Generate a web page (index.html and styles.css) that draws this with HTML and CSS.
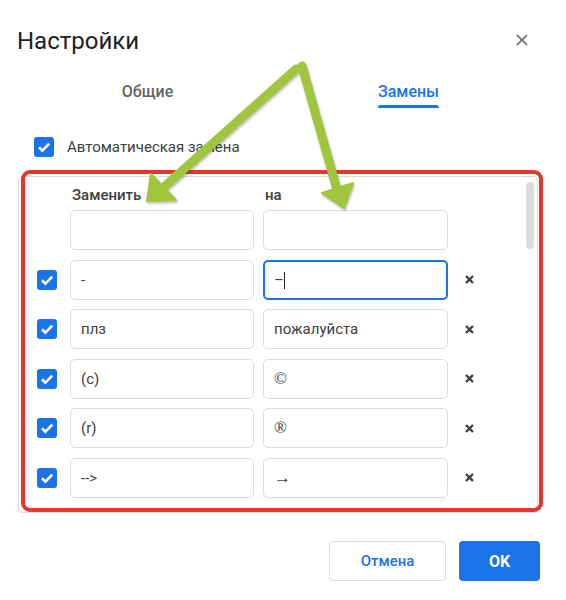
FILE: index.html
```html
<!DOCTYPE HTML>
<html>
<head>
  <meta charset="utf-8">
  <title>Настройки</title>
  <link rel="stylesheet" href="styles.css">
</head>
<body>
<div class="dialog">
  <header class="dialog-head">
    <h1>Настройки</h1>
    <span class="close">
      <svg width="12" height="12" viewBox="0 0 12 12"><path d="M1 1L11 11M11 1L1 11" stroke="#5f6368" stroke-width="1.6" fill="none"/></svg>
    </span>
  </header>
  <nav class="tabs">
    <div class="tab"><span>Общие</span></div>
    <div class="tab active"><span>Замены</span></div>
  </nav>
  <label class="auto">
    <span class="check"><svg width="20" height="20" viewBox="0 0 20 20"><path d="M5 10.3L8.4 13.6L15.2 6.6" stroke="#fff" stroke-width="2.6" fill="none"/></svg></span>
    Автоматическая замена
  </label>
  <section class="subs">
    <div class="subs-head">
      <span></span><span>Заменить</span><span>на</span><span></span>
    </div>
    <div class="subs-list">
      <div class="row">
        <span></span>
        <div class="field"></div>
        <div class="field"></div>
        <span></span>
      </div>
      <div class="row">
        <span class="check"><svg width="20" height="20" viewBox="0 0 20 20"><path d="M5 10.3L8.4 13.6L15.2 6.6" stroke="#fff" stroke-width="2.6" fill="none"/></svg></span>
        <div class="field">-</div>
        <div class="field focus">–<i class="caret"></i></div>
        <span class="del"><svg width="9" height="9" viewBox="0 0 9 9"><path d="M1 1L8 8M8 1L1 8" stroke="#3c4043" stroke-width="2.4" fill="none"/></svg></span>
      </div>
      <div class="row">
        <span class="check"><svg width="20" height="20" viewBox="0 0 20 20"><path d="M5 10.3L8.4 13.6L15.2 6.6" stroke="#fff" stroke-width="2.6" fill="none"/></svg></span>
        <div class="field">плз</div>
        <div class="field">пожалуйста</div>
        <span class="del"><svg width="9" height="9" viewBox="0 0 9 9"><path d="M1 1L8 8M8 1L1 8" stroke="#3c4043" stroke-width="2.4" fill="none"/></svg></span>
      </div>
      <div class="row">
        <span class="check"><svg width="20" height="20" viewBox="0 0 20 20"><path d="M5 10.3L8.4 13.6L15.2 6.6" stroke="#fff" stroke-width="2.6" fill="none"/></svg></span>
        <div class="field">(c)</div>
        <div class="field"><span class="sym">©</span></div>
        <span class="del"><svg width="9" height="9" viewBox="0 0 9 9"><path d="M1 1L8 8M8 1L1 8" stroke="#3c4043" stroke-width="2.4" fill="none"/></svg></span>
      </div>
      <div class="row">
        <span class="check"><svg width="20" height="20" viewBox="0 0 20 20"><path d="M5 10.3L8.4 13.6L15.2 6.6" stroke="#fff" stroke-width="2.6" fill="none"/></svg></span>
        <div class="field">(r)</div>
        <div class="field"><span class="sym">®</span></div>
        <span class="del"><svg width="9" height="9" viewBox="0 0 9 9"><path d="M1 1L8 8M8 1L1 8" stroke="#3c4043" stroke-width="2.4" fill="none"/></svg></span>
      </div>
      <div class="row">
        <span class="check"><svg width="20" height="20" viewBox="0 0 20 20"><path d="M5 10.3L8.4 13.6L15.2 6.6" stroke="#fff" stroke-width="2.6" fill="none"/></svg></span>
        <div class="field">--&gt;</div>
        <div class="field"><span class="sym">→</span></div>
        <span class="del"><svg width="9" height="9" viewBox="0 0 9 9"><path d="M1 1L8 8M8 1L1 8" stroke="#3c4043" stroke-width="2.4" fill="none"/></svg></span>
      </div>
    </div>
    <span class="thumb"></span>
  </section>
  <footer class="actions">
    <button class="btn cancel">Отмена</button>
    <button class="btn ok">OK</button>
  </footer>
</div>
<!--рамка и стрелки поверх диалога-->
<div class="frame"></div>
<svg class="arrows" width="566" height="600" viewBox="0 0 566 600">
  <g fill="#a1c53c" stroke="#a1c53c" stroke-linecap="round" stroke-linejoin="round">
    <line x1="296" y1="69" x2="165" y2="186" stroke-width="9"/>
    <polygon points="147,201 151,174 176,200" stroke-width="2"/>
    <line x1="302" y1="66" x2="336" y2="186" stroke-width="9"/>
    <polygon points="344,208 322,193 353,183" stroke-width="2"/>
  </g>
</svg>
</body>
</html>
```

FILE: styles.css
```css
/*Style initialization*/
body{margin:0;padding:0;position:relative;background:#fff;font-family:Roboto,"Noto Sans",Arial,sans-serif;}
button{font-family:inherit;}

/*1.шапка*/
.dialog-head{
	display:flex;
	align-items:center;
	justify-content:space-between;
	padding:25px 38px 0 17px;
}
.dialog-head h1{
	margin:0;
	font-size:24px;
	font-weight:400;
	line-height:32px;
	color:#202124;
}
.close{
	display:block;
	width:12px;
	height:12px;
	margin-top:-2px;
}
.close svg{display:block;}

/*2.вкладки*/
.tabs{
	display:flex;
	padding:0 27px 0 17px;
}
.tab{
	flex:1;
	padding-top:25px;
	text-align:center;
	font-size:16px;
	font-weight:500;
	line-height:20px;
	color:#5f6368;
}
.tab>span{
	display:inline-block;
	padding:0 5px;
}
.tab>span::after{
	content:"";
	display:block;
	height:3px;
	margin-top:3px;
	border-radius:3px 3px 0 0;
}
.tab.active{color:#1a73e8;}
.tab.active>span::after{background:#1a73e8;}

/*3.флажки*/
.check{
	display:inline-block;
	width:20px;
	height:20px;
	border-radius:3px;
	background:#1a73e8;
}
.check svg{display:block;}
.auto{
	display:flex;
	align-items:center;
	gap:13px;
	margin-top:29px;
	padding-left:34px;
	font-size:15px;
	line-height:20px;
	color:#3c4043;
}

/*4.список замен*/
.subs{
	position:relative;
	box-sizing:border-box;
	height:337px;
	margin:19px 28px 0 18px;
	padding:8px 0 0 18px;
	border:1px solid #dadce0;
	border-radius:4px;
	overflow:hidden;
}
.subs-head,.row{
	display:grid;
	grid-template-columns:24px 184px 185px 24px;
	column-gap:9px;
	align-items:center;
}
.subs-head{
	height:20px;
	margin-bottom:5px;
	font-size:15px;
	font-weight:500;
	line-height:20px;
	color:#3c4043;
}
.subs-head>span{padding-left:2px;}
.subs-list{
	display:flex;
	flex-direction:column;
	gap:9.6px;
}
.field{
	box-sizing:border-box;
	height:40px;
	padding:0 10px;
	border:1px solid #dadce0;
	border-radius:5px;
	font-size:15px;
	font-weight:400;
	line-height:38px;
	color:#3c4043;
}
.field.focus{
	padding:0 9px;
	border:2px solid #1a73e8;
	line-height:36px;
}
.sym{
	font-family:"Liberation Serif","Noto Sans",serif;
	font-size:17px;
	font-weight:400;
}
.caret{
	display:inline-block;
	width:1px;
	height:17px;
	vertical-align:middle;
	background:#202124;
}
.del{
	display:flex;
	justify-content:center;
}
.del svg{display:block;}
.thumb{
	position:absolute;
	top:5px;
	right:3px;
	width:8px;
	height:67px;
	border-radius:4px;
	background:#dadce0;
}

/*5.кнопки*/
.actions{
	display:flex;
	justify-content:flex-end;
	gap:13px;
	margin-top:28px;
	padding-right:26px;
}
.btn{
	box-sizing:border-box;
	height:40px;
	padding:0;
	border-radius:4px;
	font-size:15px;
	font-weight:500;
}
.cancel{
	min-width:117px;
	border:1px solid #dadce0;
	background:#fff;
	color:#1a73e8;
}
.ok{
	min-width:81px;
	border:0;
	background:#1a73e8;
	color:#fff;
	font-size:16px;
	font-weight:700;
}

/*6.пометки*/
.frame{
	position:absolute;
	left:21px;
	top:170px;
	box-sizing:border-box;
	width:522px;
	height:342px;
	border:4.5px solid #e3392d;
	border-radius:9px;
}
.arrows{
	position:absolute;
	left:0;
	top:0;
	pointer-events:none;
	filter:drop-shadow(1px 2px 1px rgba(0,0,0,.25));
}
```
